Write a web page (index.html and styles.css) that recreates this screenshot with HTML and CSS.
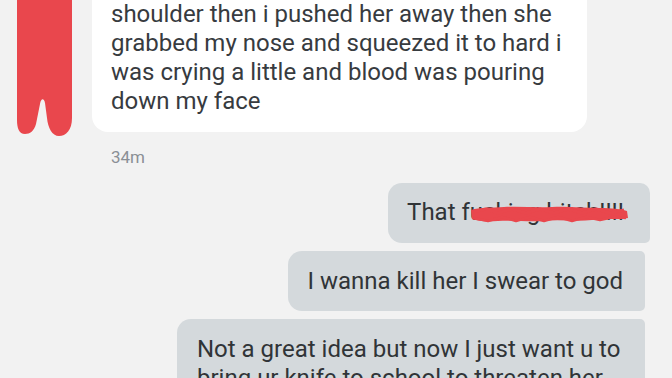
FILE: index.html
```html
<!DOCTYPE html>
<html>
<head>
<meta charset="utf-8">
<link rel="stylesheet" href="styles.css">
</head>
<body>
<div class="chat">
  <div class="row-in">
    <svg class="blob" viewBox="0 -16 80 152" width="80" height="152" aria-hidden="true">
      <path d="M17 -16 L72 -16 L72 118 C72 130 66 136 59 136 C52 136 48 128 47 118 L45 103 C44 98 41 98 40 104 L36 124 C34 131 30 134 25 134 C19 134 17 128 17 120 Z" fill="#e9474d"/>
    </svg>
    <div class="bubble-in">shoulder then i pushed her away then she grabbed my nose and squeezed it to hard i was crying a little and blood was pouring down my face</div>
  </div>
  <div class="time">34m</div>
  <div class="out-group">
    <div class="bubble-out first">That fucking bitch!!!!
      <svg class="scribble" viewBox="0 0 160 20" width="160" height="20" aria-hidden="true">
        <path d="M1 5 C10 2 22 3 34 2 C50 1 66 3 82 2 C98 1 114 3 130 3 C142 3 150 4 157 6 L158 13 C148 15 136 13 122 15 C106 17 90 14 74 16 C58 17 42 15 28 16 C16 17 8 16 2 14 Z" fill="#e9474d"/>
        <path d="M3 7 L16 4 L28 8 L42 4 L56 8 L70 4 L84 8 L98 4 L112 8 L126 4 L140 8 L154 5" stroke="#e9474d" stroke-width="3" fill="none" stroke-linejoin="round"/>
        <path d="M3 13 L18 16 L32 12 L46 16 L60 12 L74 16 L88 12 L102 16 L116 12 L130 15 L144 12 L156 13" stroke="#e9474d" stroke-width="2.5" fill="none" stroke-linejoin="round"/>
      </svg>
    </div>
    <div class="bubble-out mid">I wanna kill her I swear to god</div>
    <div class="bubble-out mid">Not a great idea but now I just want u to bring ur knife to school to threaten her</div>
  </div>
</div>
</body>
</html>
```
FILE: styles.css
```css
html, body {
  margin: 0;
  padding: 0;
  background: #f2f2f2;
  overflow: hidden;
}
body {
  width: 672px;
  height: 378px;
  font-family: Roboto, "Noto Sans", "Liberation Sans", sans-serif;
}
.chat {
  margin-top: -16px;
  display: flex;
  flex-direction: column;
}
.row-in {
  position: relative;
  display: flex;
  padding-left: 92px;
}
.blob {
  position: absolute;
  left: 0;
  top: 0;
}
.bubble-in {
  box-sizing: border-box;
  width: 495px;
  padding: 16px 17px 16px 19px;
  background: #ffffff;
  border-radius: 4px 4px 16px 16px;
  color: #373b3f;
  font-size: 24px;
  line-height: 29px;
}
.time {
  margin-top: 15px;
  padding-left: 111px;
  font-size: 17px;
  line-height: 20px;
  color: #8a8f95;
}
.out-group {
  margin-top: 16px;
  display: flex;
  flex-direction: column;
  align-items: flex-end;
  gap: 8px;
  padding-right: 22px;
}
.bubble-out {
  position: relative;
  box-sizing: border-box;
  max-width: 468px;
  padding: 16px 22px 15px 20px;
  background: #d4d9dc;
  color: #303437;
  font-size: 24px;
  line-height: 29px;
  border-radius: 14px 5px 5px 14px;
}
.bubble-out.first {
  border-radius: 14px 10px 5px 14px;
  padding: 15px 26px 16px 19px;
}
.bubble-out.mid {
  margin-right: 5px;
}
.scribble {
  position: absolute;
  left: 82px;
  top: 22px;
}
```
